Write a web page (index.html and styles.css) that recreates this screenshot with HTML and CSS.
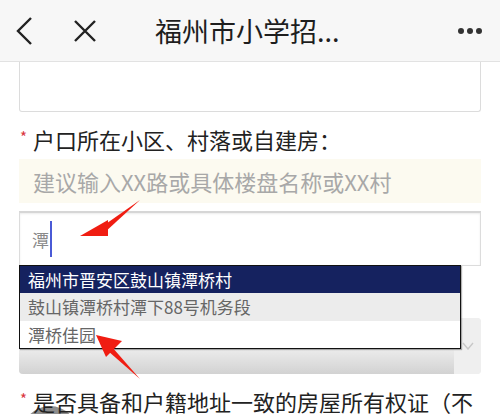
FILE: index.html
```html
<!DOCTYPE html>
<html lang="zh-CN">
<head>
    <meta charset="UTF-8">
    <meta name="viewport" content="width=device-width, initial-scale=1.0">
    <title>福州市小学招生</title>
    <link rel="stylesheet" href="styles.css">
</head>
<body>
    <div class="topbar">
        <svg class="icon-back" width="20" height="30" viewBox="0 0 20 30"><path d="M17 2 L4 15 L17 28" fill="none" stroke="#222" stroke-width="2.4"/></svg>
        <svg class="icon-close" width="24" height="24" viewBox="0 0 24 24"><path d="M2 2 L22 22 M22 2 L2 22" fill="none" stroke="#222" stroke-width="2.4"/></svg>
        <div class="title">福州市小学招...</div>
        <div class="more"><span></span><span></span><span></span></div>
    </div>

    <div class="fab"></div>

    <div class="page">
        <div class="box prev-box"></div>

        <div class="label"><span class="req">*</span>户口所在小区、村落或自建房：</div>
        <div class="hint">建议输入XX路或具体楼盘名称或XX村</div>
        <div class="box text-input">
            <span class="typed">潭</span><span class="caret"></span>
        </div>

        <div class="select-box">
            <div class="select-main"></div>
            <div class="select-arrow">
                <svg width="12" height="8" viewBox="0 0 12 8"><path d="M1 1 L6 7 L11 1" fill="none" stroke="#c8c8c8" stroke-width="1.4"/></svg>
            </div>
        </div>

        <div class="label label-2"><span class="req">*</span>是否具备和户籍地址一致的房屋所有权证（不</div>

        <ul class="suggest">
            <li class="active">福州市晋安区鼓山镇潭桥村</li>
            <li class="grey">鼓山镇潭桥村潭下88号机务段</li>
            <li>潭桥佳园</li>
        </ul>
    </div>

    <!-- 标注箭头 -->
    <svg class="mark mark-1" width="80" height="50" viewBox="0 0 80 50"><path d="M62 2 L22 30 L26 35 Z" fill="#f01d12"/><path d="M2 38 L30 22 L30 38 Z" fill="#f01d12"/></svg>
    <svg class="mark mark-2" width="60" height="50" viewBox="0 0 60 50"><path d="M44 48 L16 16 L12 20 Z" fill="#f01d12"/><path d="M0 4 L26 10 L10 26 Z" fill="#f01d12"/></svg>
</body>
</html>
```

FILE: styles.css
```css
* {
    box-sizing: border-box;
}
body {
    margin: 0;
    background: #fff;
    font-family: "Noto Sans CJK SC", "Noto Sans", sans-serif;
    color: #222;
    overflow: hidden;
    height: 414px;
    position: relative;
}
.topbar {
    height: 62px;
    background: #f7f7f7;
    border-bottom: 1px solid #e2e2e2;
    display: flex;
    align-items: center;
}
.icon-back {
    margin-left: 14px;
}
.icon-close {
    margin-left: 39px;
}
.title {
    margin-left: 58px;
    font-size: 27px;
    color: #1e1e1e;
    flex: 1;
    line-height: 30px;
}
.more {
    display: flex;
    gap: 3px;
    margin-right: 18px;
}
.more span {
    width: 6px;
    height: 6px;
    border-radius: 50%;
    background: #333;
}
.page {
    padding: 0 19px;
    position: relative;
}
.box {
    border: 1px solid #dcdcdc;
    background: #fff;
}
.prev-box {
    height: 50px;
    border-top: none;
    border-radius: 0 0 3px 3px;
}
.label {
    margin-top: 11px;
    font-size: 22px;
    line-height: 32px;
    color: #222;
    position: relative;
    padding-left: 14px;
}
.req {
    position: absolute;
    left: 1px;
    top: -2px;
    color: #d9363e;
    font-size: 15px;
}
.hint {
    margin-top: 4px;
    height: 44px;
    background: #fcfaf0;
    color: #a8a8a8;
    font-size: 22px;
    line-height: 44px;
    padding-left: 14px;
}
.text-input {
    margin-top: 8px;
    height: 55px;
    border-top: 2px solid #d6d6d6;
    box-shadow: inset 0 1px 2px rgba(0,0,0,0.08);
    display: flex;
    align-items: center;
    padding-left: 12px;
}
.typed {
    color: #8a8a8a;
    font-size: 17px;
}
.caret {
    width: 2px;
    height: 36px;
    background: #4a5ad6;
    margin-left: 1px;
}
.select-box {
    margin-top: 52px;
    height: 56px;
    display: flex;
    border-radius: 4px;
    overflow: hidden;
    background: #efefef;
}
.select-main {
    flex: 1;
    background: linear-gradient(#f2f2f2, #ececec 55%, #d2d2d2);
}
.select-arrow {
    width: 27px;
    background: #efefef;
    display: flex;
    align-items: center;
    justify-content: center;
}
.label-2 {
    margin-top: 11px;
    font-size: 22px;
}
.suggest {
    list-style: none;
    margin: 0;
    padding: 0;
    position: absolute;
    left: 19px;
    top: 203px;
    width: 442px;
    border: 1px solid #111;
    background: #fff;
    box-shadow: 1px 1px 1px rgba(0,0,0,0.3);
}
.suggest li {
    height: 27.3px;
    line-height: 27px;
    font-size: 17px;
    padding-left: 8px;
    color: #666;
}
.suggest li.active {
    background: #15225f;
    color: #fff;
}
.suggest li.grey {
    background: #ececec;
}
.fab {
    position: absolute;
    left: 22px;
    top: 406px;
    width: 56px;
    height: 56px;
    border-radius: 50%;
    background: #8d8d8d;
}
.mark {
    position: absolute;
}
.mark-1 {
    left: 78px;
    top: 198px;
}
.mark-2 {
    left: 96px;
    top: 331px;
}
```
